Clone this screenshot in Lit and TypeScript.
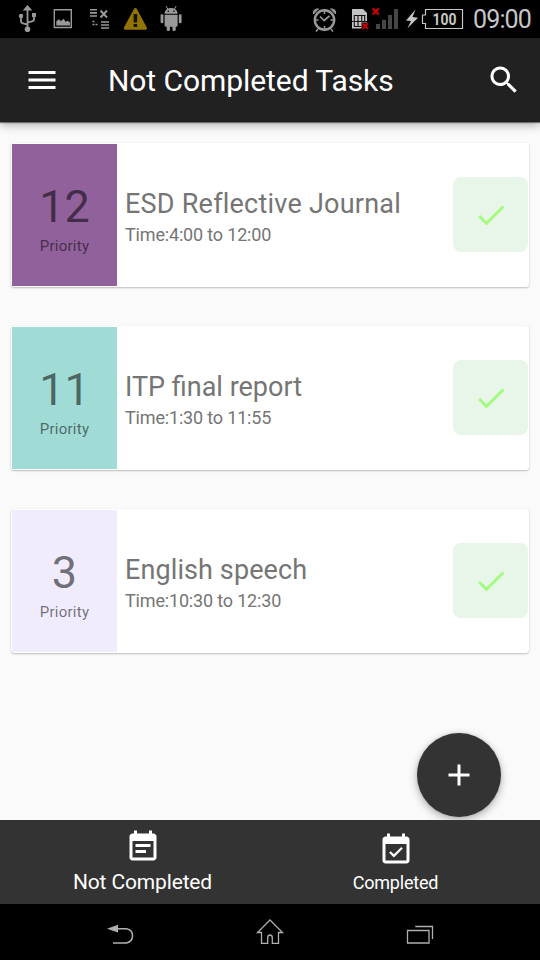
import { LitElement, html, css } from "lit";
import { customElement, property } from "lit/decorators.js";
import { styleMap } from "lit/directives/style-map.js";

interface Task {
  priority: number;
  title: string;
  time: string;
  color: string;
  tracking?: string;
}

const TASKS: Task[] = [
  { priority: 12, title: "ESD Reflective Journal", time: "Time:4:00 to 12:00", color: "#91619b", tracking: "0.23px" },
  { priority: 11, title: "ITP final report", time: "Time:1:30 to 11:55", color: "#a1dbd5" },
  { priority: 3, title: "English speech", time: "Time:10:30 to 12:30", color: "#f0ecfd", tracking: "0.1px" },
];

const CALENDAR =
  "M19 3h-1V1h-2v2H8V1H6v2H5c-1.11 0-1.99.9-1.99 2L3 19c0 1.1.89 2 2 2h14c1.1 0 2-.9 2-2V5c0-1.1-.9-2-2-2zm0 16H5V8h14v11z";
const ICONS: Record<string, string> = {
  menu: "M3 18h18v-2H3v2zm0-5h18v-2H3v2zm0-7v2h18V6H3z",
  search:
    "M15.5 14h-.79l-.28-.27C15.41 12.59 16 11.11 16 9.5 16 5.91 13.09 3 9.5 3S3 5.91 3 9.5 5.91 16 9.5 16c1.61 0 3.09-.59 4.23-1.57l.27.28v.79l5 4.99L20.49 19l-4.99-5zm-6 0C7.01 14 5 11.99 5 9.5S7.01 5 9.5 5 14 7.01 14 9.5 11.99 14 9.5 14z",
  check: "M9 16.17L4.83 12l-1.42 1.41L9 19 21 7l-1.41-1.41z",
  plus: "M19 13h-6v6h-2v-6H5v-2h6V5h2v6h6v2z",
  note: "M17 10H7v2h10v-2zm-3 4H7v2h7v-2z" + CALENDAR,
  available: "M16.53 11.06L15.47 10l-4.88 4.88-2.12-2.12-1.06 1.06L10.59 17l5.94-5.94z" + CALENDAR,
};

const icon = (name: string) => html`
  <svg class="icon" width="36" height="36" viewBox="0 0 24 24"><path fill="currentColor" fill-rule="evenodd" d=${ICONS[name]} /></svg>
`;

@customElement("status-bar")
class StatusBar extends LitElement {
  static styles = css`
    :host {
      display: flex;
      height: 38px;
      box-sizing: border-box;
      background: #000;
      padding: 0 8px 0 18px;
      color: #c6c6c6;
      font-family: Roboto, sans-serif;
    }
    svg { display: block; flex: none; }
    .left, .right { display: flex; }
    .picture { margin-left: 13px; }
    .queue { margin-left: 15px; }
    .warning { margin-left: 12px; }
    .droid { margin-left: 11px; }
    .right { margin-left: auto; }
    .sim { margin-left: 14px; }
    .bolt { margin-left: 5px; }
    .battery { margin-left: 2px; }
    .pct { font: bold 16px Roboto, sans-serif; }
    .clock { width: 59px; margin-left: 9px; font-size: 25px; line-height: 39px; letter-spacing: -0.85px; white-space: nowrap; }
  `;

  render() {
    return html`
      <div class="left">
        <svg width="20" height="38" viewBox="18 0 20 38" fill="none" stroke="#999" stroke-width="1.8">
          <path d="M27.5 9v19M21 17v4q0 2 2 2.3l4 1M34 15v4q0 2-2 2.3l-4 1" />
          <path d="M27.5 5l4.8 5.5h-9.6zM32 13h4v4h-4z" fill="#999" stroke="none" />
          <circle cx="21" cy="16" r="2.2" fill="#999" stroke="none" /><circle cx="27.5" cy="29.2" r="2.8" fill="#999" stroke="none" />
        </svg>
        <svg class="picture" width="22" height="38" viewBox="51 0 22 38">
          <path d="M54.3 9.7h17v17.8h-17z" fill="none" stroke="#999" stroke-width="1.4" />
          <path d="M56.3 25.5v-4.3l2.7-2 2 2 2.5-2.5 2.2 3 2-1 2.3 1.8v3z" fill="#999" />
        </svg>
        <svg class="queue" width="23" height="38" viewBox="88 0 23 38" stroke="#999" stroke-width="1.6">
          <path d="M90 9.8h7M90 12.9h7M90 16h7M101 22h8M101 25h8M101 28h8" />
          <path d="M100.5 10.5l6.5 7M107 10.5l-6.5 7" stroke-width="1.9" />
          <path d="M92.5 21.5h2M92.5 24.5h2M95.5 24.5h2" stroke-width="1.3" />
        </svg>
        <svg class="warning" width="25" height="38" viewBox="123 0 25 38">
          <path d="M135.4 9.5l10.1 18.8h-20.2z" fill="#927400" stroke="#927400" stroke-width="3" stroke-linejoin="round" />
          <path d="M133.6 14h3.6v8.5h-3.6zM133.6 24h3.6v3h-3.6z" fill="#15120a" />
        </svg>
        <svg class="droid" width="24" height="38" viewBox="159 0 24 38" fill="#999">
          <path d="M164.6 13.7c0-3.6 2.8-5.8 6.5-5.8s6.5 2.2 6.5 5.8zM164.6 14.7h13v10.6q0 1.5-1.5 1.5h-10q-1.5 0-1.5-1.5z" />
          <path d="M166.7 25h3.2v5q0 1-1.6 1t-1.6-1zM172.5 25h3.2v5q0 1-1.6 1t-1.6-1z" />
          <rect x="160.6" y="14.3" width="2.8" height="9" rx="1.2" /><rect x="178.8" y="14.3" width="2.8" height="9" rx="1.2" />
          <path d="M166 6l1.8 3M176.2 6l-1.8 3" stroke="#999" stroke-width="1" />
          <circle cx="168.3" cy="11.3" r=".8" fill="#000" /><circle cx="173.9" cy="11.3" r=".8" fill="#000" />
        </svg>
      </div>
      <div class="right">
        <svg width="25" height="38" viewBox="312 0 25 38" fill="none" stroke="#999">
          <circle cx="324.5" cy="20" r="9.7" stroke-width="2.4" />
          <path d="M313.5 14q-1.2-5 5-5.2zM335.5 14q1.2-5-5-5.2z" fill="#999" stroke-width="1" />
          <path d="M320 16.5l4.2 4 5.3-4.7" stroke-width="1.7" />
          <path d="M324.5 11v3M324.5 26v3M315.5 20h3M330.5 20h3M318 29l-2 2.6M331 29l2 2.6" stroke-width="1.5" />
        </svg>
        <svg class="sim" width="20" height="38" viewBox="351 0 20 38">
          <path d="M352 9h11l4 4v15.5h-15z" fill="#c2c2c2" />
          <path d="M354 15.5h11.5M352 21.5h15M354 26.5h7M354.3 15v12M358 15.5v6M361.7 15.5v6M358 21.500v5M364.700 15v7" stroke="#111" stroke-width="1.100" fill="none" />
          <path d="M361.500 22.500h7v7h-7z" fill="#000" />
          <path d="M362.200 23.300l6 5.400M368.200 23.300l-6 5.400" stroke="#c40000" stroke-width="2.200" />
        </svg>
        <svg width="29" height="38" viewBox="371 0 29 38">
          <path d="M376 24h4v5h-4zM382 19.700h4v9.300h-4zM388 15h4v14h-4zM394 9h4v20h-4z" fill="#464646" />
          <path d="M372.700 8.300l6 6M378.700 8.300l-6 6" stroke="#c40000" stroke-width="2.400" />
        </svg>
        <svg class="bolt" width="14" height="38" viewBox="405 0 14 38"><path d="M415.500 9.500l-9.500 11 5 .5-3.500 7.200 10.500-10.500-5.500-.7z" fill="#c6c6c6" /></svg>
        <svg class="battery" width="43" height="38" viewBox="421 0 43 38">
          <path d="M425.500 9.500h37v19h-37v-5h-3v-8.500h3z" fill="none" stroke="#c6c6c6" stroke-width="1.200" />
          <text class="pct" x="432.500" y="25" fill="#c6c6c6" textLength="24" lengthAdjust="spacingAndGlyphs">100</text>
        </svg>
        <div class="clock">09:00</div>
      </div>
    `;
  }
}

@customElement("task-card")
class TaskCard extends LitElement {
  @property({ attribute: false }) task!: Task;

  static styles = css`
    :host {
      display: flex;
      align-items: center;
      box-sizing: border-box;
      height: 144px;
      padding: 1px;
      border-radius: 3px;
      background: #fff;
      box-shadow: 0 1px 2px rgba(0, 0, 0, 0.24), 0 0 1px rgba(0, 0, 0, 0.1);
      color: #757575;
      font-family: Roboto, sans-serif;
    }
    .badge {
      flex: none;
      width: 105px;
      height: 142px;
      box-sizing: border-box;
      padding-top: 36px;
      text-align: center;
      color: rgba(0, 0, 0, 0.54);
    }
    .number { font-size: 45px; line-height: 54px; }
    .label { margin-top: 3px; font-size: 15px; line-height: 18px; letter-spacing: 0.25px; }
    .text { flex: 1; padding: 3px 0 0 8px; white-space: nowrap; }
    .title { font-size: 27px; line-height: 32px; }
    .time { margin-top: 4px; font-size: 18px; line-height: 21px; letter-spacing: -0.17px; }
    .done {
      flex: none;
      display: grid;
      place-items: center;
      width: 75px;
      height: 75px;
      margin-bottom: 1px;
      border-radius: 8px;
      background: #e8f5e9;
      color: #a3fb80;
    }
    .icon { display: block; }
  `;

  render() {
    const t = this.task;
    return html`
      <div class="badge" style=${styleMap({ background: t.color })}>
        <div class="number">${t.priority}</div>
        <div class="label">Priority</div>
      </div>
      <div class="text">
        <div class="title" style=${styleMap({ letterSpacing: t.tracking ?? "normal" })}>${t.title}</div>
        <div class="time">${t.time}</div>
      </div>
      <div class="done">${icon("check")}</div>
    `;
  }
}

@customElement("app-root")
class AppRoot extends LitElement {
  static styles = css`
    :host {
      display: flex;
      flex-direction: column;
      width: 540px;
      height: 960px;
      overflow: hidden;
      background: #fafafa;
      font-family: Roboto, sans-serif;
      color: #fff;
    }
    svg { display: block; }
    .header {
      flex: none;
      position: relative;
      display: flex;
      align-items: center;
      box-sizing: border-box;
      height: 84px;
      padding: 0 18px 0 24px;
      background: #212121;
      box-shadow: 0 1px 1px rgba(0, 0, 0, 0.45), 0 3px 9px rgba(0, 0, 0, 0.3);
    }
    .heading { flex: 1; margin-left: 48px; padding-top: 1px; font-size: 30px; line-height: 36px; letter-spacing: -0.07px; white-space: nowrap; }
    .content { flex: 1; position: relative; }
    .list { display: flex; flex-direction: column; gap: 39px; padding: 21px 11px; }
    .fab {
      position: absolute;
      right: 39px;
      bottom: 3px;
      display: grid;
      place-items: center;
      width: 84px;
      height: 84px;
      border-radius: 50%;
      background: #333;
      box-shadow: 0 3px 8px rgba(0, 0, 0, 0.3), 0 0 3px rgba(0, 0, 0, 0.14);
    }
    .tabs { flex: none; position: relative; display: flex; height: 84px; padding-left: 16px; background: #333; }
    .tab { width: 253px; display: flex; flex-direction: column; align-items: center; box-sizing: border-box; padding-top: 12px; font-size: 18px; line-height: 24px; letter-spacing: -0.2px; white-space: nowrap; }
    .tab .name { margin-top: 3px; }
    .tab.active { padding-top: 9px; font-size: 21px; letter-spacing: -0.14px; }
    .tab.active .name { margin-top: 5px; }
    .system { flex: none; display: flex; justify-content: center; gap: 120px; height: 56px; background: #000; }
  `;

  render() {
    return html`
      <status-bar></status-bar>
      <div class="header">
        ${icon("menu")}
        <div class="heading">Not Completed Tasks</div>
        ${icon("search")}
      </div>
      <div class="content">
        <div class="list">${TASKS.map((t) => html`<task-card .task=${t}></task-card>`)}</div>
        <div class="fab">${icon("plus")}</div>
      </div>
      <div class="tabs">
        <div class="tab active">${icon("note")}<div class="name">Not Completed</div></div>
        <div class="tab">${icon("available")}<div class="name">Completed</div></div>
      </div>
      <div class="system">
        <svg width="30" height="56" viewBox="105 904 30 56">
          <path d="M117 928.800h9.500c8 1.500 8 12.500 0 14.200h-13.500" fill="none" stroke="#b0b0b0" stroke-width="1.500" />
          <path d="M107 928.800l11-4v7.800z" fill="#b0b0b0" />
        </svg>
        <svg width="30" height="56" viewBox="255 904 30 56">
          <path d="M270 920l12.500 12.500h-4v10.800h-6.200v-6q-.3-2.300-2.300-2.300t-2.300 2.300v6h-6.200v-10.800h-4z" fill="none" stroke="#b0b0b0" stroke-width="1.300" />
        </svg>
        <svg width="30" height="56" viewBox="405 904 30 56">
          <path d="M407.500 930.500h21.500v12.500h-21.500zM415.300 926.500h17.200v12.500" fill="none" stroke="#b0b0b0" stroke-width="1.300" />
        </svg>
      </div>
    `;
  }
}
